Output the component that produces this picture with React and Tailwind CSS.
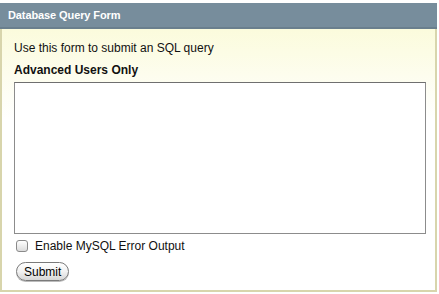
import React from 'react';

const App = () => {
  return (
    <div className="w-[439px] h-[294px] bg-white pt-[3px] font-['Liberation_Sans',Arial,sans-serif]">
      <div className="w-[437px]">
        <div className="h-[26px] bg-[#778d9c] border-b-2 border-[#6a7f8d] pl-[8px] flex items-center">
          <span className="text-white text-[11px] font-bold tracking-[-0.1px]">Database Query Form</span>
        </div>
        <div className="h-[263px] border-x-2 border-b-2 border-[#d8d5ac] bg-linear-to-b from-[#fbfbdc] to-white to-[35%] pl-[12px] pr-[9px] pt-[11px] text-[12px] text-[#111]">
          <p className="leading-[16px]">Use this form to submit an SQL query</p>
          <p className="mt-[6px] font-bold leading-[16px]">Advanced Users Only</p>
          <textarea className="mt-[4px] block w-[412px] h-[152px] bg-white border border-[#8c8c8c] border-t-[#6f6f6f] resize-none outline-none" />
          <label className="mt-[4px] flex items-center gap-[7px] pl-[2px]">
            <input type="checkbox" className="appearance-none w-[12px] h-[12px] rounded-[3px] border border-[#8a8a8a] bg-linear-to-b from-white to-[#dcdcdc]" />
            <span className="text-[12px] leading-[16px]">Enable MySQL Error Output</span>
          </label>
          <button className="mt-[8px] ml-[2px] h-[19px] px-[7px] rounded-full border border-[#7a7a7a] bg-linear-to-b from-white via-[#f2f2f2] to-[#d6d6d6] text-[12px] leading-[14px] text-black shadow-[0_1px_0_#bbb]">
            Submit
          </button>
        </div>
      </div>
    </div>
  );
};

export default App;
